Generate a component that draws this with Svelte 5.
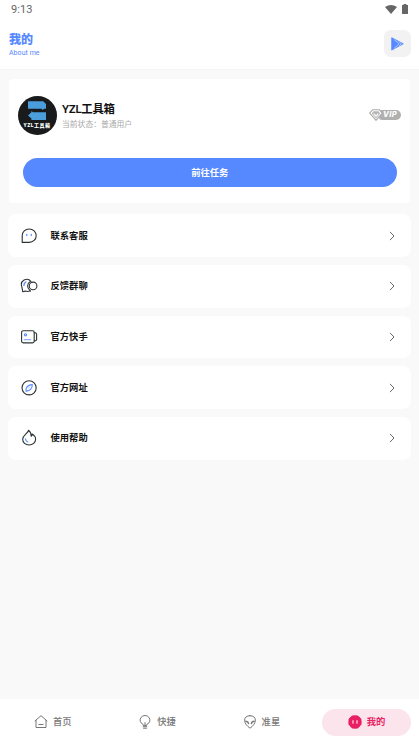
<script>
  const rows = [
    { label: '联系客服', icon: 'chat' },
    { label: '反馈群聊', icon: 'group' },
    { label: '官方快手', icon: 'video' },
    { label: '官方网址', icon: 'compass' },
    { label: '使用帮助', icon: 'flame' }
  ];
  const tabs = [
    { label: '首页', icon: 'home' },
    { label: '快捷', icon: 'bulb' },
    { label: '准星', icon: 'alien' },
    { label: '我的', icon: 'face', active: true }
  ];
</script>

<div class="screen">
  <header>
    <div class="status">
      <span>9:13</span>
      <div class="signals">
        <svg width="12" height="9" viewBox="0 0 12 9"><path d="M0 2Q6-2 12 2L6 9Z" fill="#666" /></svg>
        <svg width="6" height="10" viewBox="0 0 6 10"><path d="M1.6 0h2.8v1H6v8.4a.6.6 0 0 1-.6.6H.6a.6.6 0 0 1-.6-.6V1h1.6z" fill="#666" /></svg>
      </div>
    </div>
    <div class="bar">
      <div class="heading">
        <h1>我的</h1>
        <p>About me</p>
      </div>
      <button class="play" aria-label="Play">
        <svg width="13" height="14" viewBox="0 0 13 14">
          <path d="M.7.7 12.3 6.8.7 13.1z" fill="#5688ff" stroke="#5688ff" stroke-width=".8" stroke-linejoin="round" />
          <path d="M3.2 2.6 8.2 6.8 3.2 11.2M8 4.6 10.2 6.8 8 9.1" fill="none" stroke="#d5e1ff" stroke-width=".7" />
        </svg>
      </button>
    </div>
  </header>

  <main>
    <section class="profile">
      <div class="user">
        <div class="avatar">
          <svg width="20" height="21" viewBox="0 0 20 21">
            <path d="M1 1.2h15.2L19 4v4.8h-2l-1.2 1.3-1.5-1.3H1z" fill="#4a9edb" />
            <path d="M19 20H4.4v-1.5L1 15.5l3.4-3.2V11L6 12.2h13z" fill="#4a9edb" />
          </svg>
          <span>YZL工具箱</span>
        </div>
        <div class="info">
          <h2>YZL工具箱</h2>
          <p>当前状态：普通用户</p>
        </div>
        <div class="vip">
          <svg width="14" height="12" viewBox="0 0 14 12">
            <path d="M3.8.7h6.4l3.1 3.5L7 11.3.7 4.2z" fill="#fff" stroke="#aaa" stroke-width="1.1" stroke-linejoin="round" />
            <path d="M4.6 2.3h4.8L11.2 4.5 7 9.4 2.8 4.5z" fill="#b5b5b5" />
            <path d="M4.7 4.7 7 7.2l2.3-2.5" fill="none" stroke="#fff" stroke-width="1.2" />
          </svg>
          <b>VIP</b>
        </div>
      </div>
      <button class="task">前往任务</button>
    </section>

    <nav class="list">
      {#each rows as row}
        <a class="row" href="#{row.icon}">
          <svg class="icon" width="18" height="18" viewBox="0 0 18 18" fill="none" stroke="#2d3436" stroke-width="1.1" stroke-linejoin="round" stroke-linecap="round">
            {#if row.icon === 'chat'}
              <path d="M2.2 15.4V8.7A7 6.7 0 1 1 9.2 15.4Z" />
              <path d="M6.8 7.4v1M11.3 7.4v1" stroke="#5688ff" stroke-width="1.2" />
            {:else if row.icon === 'group'}
              <path d="M10.9 4.4A5.3 5.3 0 0 0 1.8 9.6l1 5.2 2.6-.7a5.8 5.8 0 0 0 4.7-.3" />
              <circle cx="13.1" cy="8.9" r="3.8" />
              <path d="M10.2 4.5a5.2 5.2 0 0 0-.5 8.6l.6 1.2" />
              <path d="M3.9 8.2a3.8 3.8 0 0 1 2-3.2" stroke="#5688ff" stroke-width="1.4" />
            {:else if row.icon === 'video'}
              <rect x="1.6" y="2.7" width="12.6" height="12.2" rx="1.6" />
              <path d="M14.2 4.8h1.4l1 1v6l-1 1h-1.4" />
              <circle cx="5.5" cy="6.8" r="1.1" stroke="#5688ff" />
              <path d="M4.3 11.6h6.2" stroke="#8bacff" />
            {:else if row.icon === 'compass'}
              <circle cx="9.1" cy="8.8" r="7.1" />
              <path d="M5.9 12.1c-.4-3.8 2.3-6.3 6.4-6.5.2 4.1-2.5 6.7-6.4 6.5Z" stroke="#5688ff" />
              <path d="M8.2 9.6 10 7.9" stroke="#b6caff" stroke-width=".7" />
            {:else}
              <path d="M8.5 1.3C7.6 4.8 2.8 6.2 2.7 10.2c-.1 3.6 2.8 5.8 6.4 5.8 3.6 0 6.5-2.3 6.5-5.8 0-2-1.1-3.8-3.4-5.2.1 1.1-.1 1.8-1 2.2C11.2 5 10.6 2.8 8.5 1.3Z" />
              <path d="M5.5 9.8c.1 1.8.8 2.8 2.3 3.2" stroke="#5688ff" />
            {/if}
          </svg>
          <span>{row.label}</span>
          <svg class="chevron" width="6" height="10" viewBox="0 0 6 10"><path d="M1 .9 5 5 1 9.1" fill="none" stroke="#666" stroke-width="1" /></svg>
        </a>
      {/each}
    </nav>
  </main>

  <nav class="tabs">
    {#each tabs as tab}
      <a class="tab" class:active={tab.active} href="#{tab.icon}">
        <svg width="14" height="14" viewBox="0 0 14 14" fill="none" stroke="currentColor" stroke-width="1" stroke-linejoin="round" stroke-linecap="round">
          {#if tab.icon === 'home'}
            <path d="M2 5.3v7.2h10V5.3M1 5.9 7 .7l6 5.2M4.9 9.5h4.2" />
          {:else if tab.icon === 'bulb'}
            <path d="M5.2 10V9.4A4.9 4.6 0 1 1 8.8 9.4V10ZM5.2 11.7h3.6M5.5 13.2h3M7 10V7.6" />
          {:else if tab.icon === 'alien'}
            <path d="M7 .7c3.4 0 5.4 1.7 5.4 4.5 0 3.3-2.5 5.9-5.4 8-2.9-2.1-5.4-4.7-5.4-8C1.6 2.4 3.6.7 7 .7Z" />
            <path d="M2.8 6.2c1.5.1 2.5.9 2.8 2.4M11.2 6.2c-1.5.1-2.5.9-2.8 2.4" stroke-width="1.4" />
          {:else}
            <path d="M4.3.4h5.4L13.4 4v5.6l-3.7 3.8H4.3L.6 9.6V4z" fill="currentColor" stroke="none" />
            <circle cx="7" cy="6.9" r="6.5" fill="currentColor" stroke="none" />
            <path d="M5 5.7v2.6M9 5.7v2.6" stroke="#fff" />
          {/if}
        </svg>
        <span>{tab.label}</span>
      </a>
    {/each}
  </nav>
</div>

<style>
  .screen {
    width: 419px;
    height: 746px;
    display: flex;
    flex-direction: column;
    background: #f9f9f9;
    font-family: Roboto, "Noto Sans CJK SC", sans-serif;
    overflow: hidden;
  }
  h1, h2, p { margin: 0; }
  a { text-decoration: none; color: inherit; }
  svg { display: block; flex: none; }
  button { border: 0; padding: 0; font-family: inherit; }
  header {
    height: 70px;
    box-sizing: border-box;
    background: #fff;
    border-bottom: 1px solid #f5f5f5;
  }
  .status {
    height: 18px;
    display: flex;
    align-items: center;
    justify-content: space-between;
    padding: 0 11px;
    font-size: 11px;
    letter-spacing: .1px;
    color: #666;
  }
  .signals { display: flex; align-items: center; gap: 5px; }
  .bar { display: flex; justify-content: space-between; padding: 12px 8px 0 9px; }
  .heading { padding-top: 1px; }
  .heading h1 { font-size: 12px; font-weight: 900; line-height: 18px; color: #5688ff; }
  .heading p { font-size: 7px; line-height: 8px; color: #5688ff; letter-spacing: .05px; }
  .play {
    width: 27px;
    height: 27px;
    border-radius: 7px;
    background: #f2f2f2;
    display: flex;
    align-items: center;
    justify-content: center;
  }
  main { flex: 1; padding: 9px 8px 0; }
  .profile {
    height: 124px;
    margin: 0 1px;
    box-sizing: border-box;
    padding: 16px 13px 0 8.5px;
    background: #fff;
    border-radius: 4px;
  }
  .user { display: flex; align-items: center; height: 40px; }
  .avatar {
    width: 39px;
    height: 39px;
    border-radius: 50%;
    background: #181a1b;
    display: flex;
    flex-direction: column;
    align-items: center;
    padding-top: 4px;
    box-sizing: border-box;
    overflow: hidden;
  }
  .avatar span { font-size: 5px; font-weight: 900; line-height: 9px; color: #fff; white-space: nowrap; letter-spacing: .5px; }
  .info { margin-left: 5.5px; padding-top: 2px; }
  .info h2 { font-size: 11.4px; font-weight: 600; line-height: 17px; color: #111; letter-spacing: -.25px; }
  .info p { font-size: 7.8px; line-height: 13px; color: #aaa; }
  .vip { display: flex; align-items: center; margin-left: auto; margin-right: -3.5px; }
  .vip svg { margin-right: -4px; z-index: 1; }
  .vip b {
    width: 22px;
    height: 10px;
    box-sizing: border-box;
    padding-left: 4.5px;
    border-radius: 3px 5px 5px 3px;
    background: #b0b0b0;
    color: #fff;
    font: italic 800 7.5px/10px Inter, sans-serif;
    letter-spacing: .4px;
  }
  .task {
    display: block;
    width: 374.5px;
    height: 29.5px;
    margin: 22.6px 0 0 5px;
    border-radius: 15px;
    background: #5688ff;
    color: #fff;
    font-size: 9.3px;
    font-weight: 700;
    line-height: 27px;
  }
  .list { display: flex; flex-direction: column; gap: 7.8px; margin-top: 11.4px; }
  .row {
    height: 42.8px;
    display: flex;
    align-items: center;
    padding: 0 16px 0 12px;
    border-radius: 8px;
    background: #fff;
    box-sizing: border-box;
  }
  .row span { flex: 1; margin-left: 12.5px; font-size: 9.3px; font-weight: 700; color: #111; line-height: 14px; }
  .tabs {
    height: 47px;
    display: flex;
    align-items: center;
    background: #fff;
    padding: 0 8px 0 9px;
    justify-content: space-between;
    box-sizing: border-box;
  }
  .tab {
    width: 89px;
    height: 27px;
    padding-bottom: 1px;
    box-sizing: border-box;
    border-radius: 14px;
    display: flex;
    align-items: center;
    justify-content: center;
    gap: 5px;
    color: #777;
    font-size: 9.3px;
    font-weight: 500;
  }
  .tab:not(.active) { padding-right: 1.5px; }
  .tab span { line-height: 14px; margin-top: -1px; }
  .tab.active { background: #fce4ec; color: #e91e63; font-weight: 700; }
</style>
